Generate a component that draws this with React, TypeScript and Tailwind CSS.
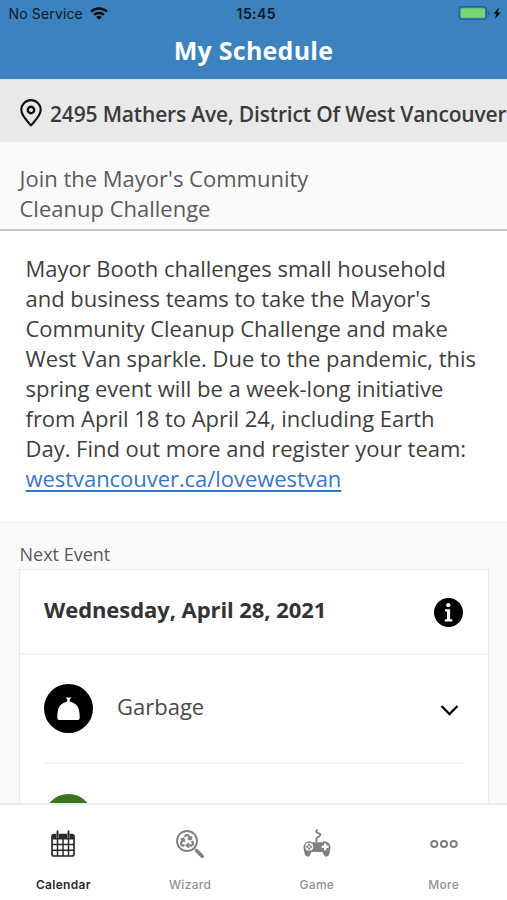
import type { ReactNode } from 'react';
import { FaRecycle } from 'react-icons/fa';
import { clsx } from 'clsx';

interface TabItem {
  id: string;
  label: string;
  icon: ReactNode;
}

const CalendarIcon = () => (
  <svg width="24" height="27" viewBox="0 0 24 27" fill="none">
    <rect x="1" y="4.5" width="22" height="21.5" rx="2" stroke="#2b2b2b" strokeWidth="1.7" />
    <path d="M1 4.500h22v5H1z" fill="#2b2b2b" />
    <path d="M1 14.500h22M1 20.200h22M6.500 9v17M12 9v17M17.500 9v17" stroke="#2b2b2b" strokeWidth="1.5" />
    <path d="M6.500 4v2.500M17.500 4v2.500" stroke="#aaa" strokeWidth="3" strokeLinecap="round" />
    <path d="M6.500 1.200v5.300M17.500 1.200v5.300" stroke="#2b2b2b" strokeWidth="1.8" strokeLinecap="round" />
  </svg>
);

const WizardIcon = () => (
  <span className="relative block h-[30px] w-[30px]">
    <svg width="30" height="30" viewBox="0 0 30 30" fill="none" stroke="#808080">
      <circle cx="12" cy="12" r="10" strokeWidth="1.9" />
      <path d="m19 19 2.5 2.5" strokeWidth="1.2" />
      <path d="m21.8 21.8 5.4 5.4" strokeWidth="3.6" strokeLinecap="round" />
    </svg>
    <FaRecycle className="absolute top-[5px] left-[5px] h-[14px] w-[14px] stroke-[#808080] stroke-[20px] text-[#808080]" />
  </span>
);

const GameIcon = () => (
  <svg width="28" height="29" viewBox="0 0 28 29" fill="none">
    <path d="M13.5 13V9.500c0-1.600 4-1.600 4-3.700S12.800 4.600 13.200 2.200c.2-.8.800-1.200 1.500-1.200" stroke="#808080" strokeWidth="1.8" />
    <path
      d="M5.5 12.5c1.300-.4 2.500 0 3.200.8h10.600c.7-.8 1.900-1.200 3.200-.8 2.800.5 5 2.900 5 5.700 0 1.500-.4 2.600-.6 3.800-.3 2.300-1 4.400-2.400 5.300-1.300.8-2.700.3-3.400-1-.6-1.200-1-2.700-1.700-3.300H8.600c-.7.6-1.100 2.100-1.700 3.300-.7 1.300-2.100 1.800-3.400 1C2.100 26.400 1.400 24.300 1.100 22 .9 20.800.5 19.700.5 18.200c0-2.800 2.200-5.200 5-5.700Z"
      fill="#808080"
    />
    <circle cx="6.2" cy="17.8" r="4" fill="#fff" />
    <path d="M6.200 14.800v6M3.200 17.800h6" stroke="#808080" strokeWidth="2" />
    <circle cx="6.2" cy="17.8" r="1" fill="#fff" />
    <path d="M22.200 14.400v6.800M18.800 17.800h6.800" stroke="#fff" strokeWidth="2.4" />
  </svg>
);

const MoreIcon = () => (
  <svg width="28" height="10" viewBox="0 0 28 10" fill="none" stroke="#808080" strokeWidth="2">
    <circle cx="4.3" cy="5" r="3.1" />
    <circle cx="14" cy="5" r="3.1" />
    <circle cx="23.7" cy="5" r="3.1" />
  </svg>
);

const tabs: TabItem[] = [
  { id: 'calendar', label: 'Calendar', icon: <CalendarIcon /> },
  { id: 'wizard', label: 'Wizard', icon: <WizardIcon /> },
  { id: 'game', label: 'Game', icon: <GameIcon /> },
  { id: 'more', label: 'More', icon: <MoreIcon /> },
];

const articleLines = [
  'Mayor Booth challenges small household',
  "and business teams to take the Mayor's",
  'Community Cleanup Challenge and make',
  'West Van sparkle. Due to the pandemic, this',
  'spring event will be a week-long initiative',
  'from April 18 to April 24, including Earth',
  'Day. Find out more and register your team:',
];

const StatusBar = () => (
  <div className="grid h-7 grid-cols-3 items-center pl-[8.5px] font-['Inter',sans-serif] text-[14px] leading-7 text-[#0c1a28]">
    <div className="flex items-center gap-[7px]">
      <span className="tracking-[0.15px] whitespace-nowrap">No Service</span>
      <svg className="-mt-[2px]" width="18" height="13" viewBox="0 0 18 13" fill="none" stroke="#050d14" strokeWidth="2.5">
        <path d="M1 4.700a11.400 11.400 0 0 1 16 0" />
        <path d="M4 7.900a7.200 7.200 0 0 1 10 0" />
        <path d="M9 12.800 6.200 10a4 4 0 0 1 5.600 0Z" fill="#050d14" stroke="none" />
      </svg>
    </div>
    <span className="pr-[3px] text-center font-semibold tracking-[0.4px]">15:45</span>
    <div className="flex items-center justify-end pr-[5px]">
      <svg className="-mt-[2px]" width="44" height="16" viewBox="0 0 44 16">
        <rect x="1" y="1.7" width="27.5" height="12.6" rx="3" fill="none" stroke="#265f91" strokeWidth="1.3" />
        <rect x="2.6" y="3.2" width="24.4" height="9.6" rx="1.6" fill="#76d671" />
        <path d="M30 6v4c1.2-.4 1.6-1.1 1.6-2s-.4-1.6-1.6-2Z" fill="#265f91" />
        <path d="m41 2.500-5.600 6.200h3L37 14l5.800-6.600h-3.200Z" fill="#050d14" />
      </svg>
    </div>
  </div>
);

const AddressBar = () => (
  <div className="flex h-[63px] shrink-0 items-center gap-[8px] border-t border-[#cfdfec] bg-[#e9e9e9] pt-[3px] pl-[20px]">
    <svg className="shrink-0" width="22" height="28" viewBox="0 0 22 28" fill="none" stroke="#111">
      <path d="M11 26.500C8.500 23 1.300 17.200 1.300 10.800a9.700 9.700 0 0 1 19.400 0C20.700 17.200 13.500 23 11 26.500Z" strokeWidth="2.1" strokeLinejoin="round" />
      <circle cx="11" cy="11" r="3.2" strokeWidth="2.4" />
    </svg>
    <span className="pt-[4px] text-[21px] font-semibold tracking-[-0.17px] whitespace-nowrap text-[#3b3b3b]">
      2495 Mathers Ave, District Of West Vancouver
    </span>
  </div>
);

const EventCard = () => (
  <div className="mr-[18px] ml-[19px] flex h-[300px] shrink-0 flex-col border border-[#ebebeb] bg-white">
    <div className="flex h-[85px] items-center justify-between border-b-2 border-[#f4f4f4] pr-[25px] pl-[24px]">
      <h2 className="pb-[5px] text-[22px] font-bold tracking-[-0.07px] text-[#333]">Wednesday, April 28, 2021</h2>
      <svg className="mt-[2px]" width="29" height="29" viewBox="0 0 29 29">
        <circle cx="14.5" cy="14.5" r="14.5" fill="#000" />
        <circle cx="14.3" cy="7.2" r="2.1" fill="#fff" />
        <path d="M11 11.200h5.100v10h2.200v2.200h-7.500v-2.200H13v-7.800h-2Z" fill="#fff" />
      </svg>
    </div>
    <div className="mx-[24px] flex h-[109px] shrink-0 items-center border-b-2 border-[#f6f6f6]">
      <svg width="49" height="49" viewBox="0 0 49 49">
        <circle cx="24.5" cy="24.5" r="24.5" fill="#000" />
        <path
          d="M21.500 13.500h6l-1.700 1.800v2.200c1.500.3 2.700 1 4.200 1.700 2.900 1.400 4.300 3.700 4.900 6.600.5 2.600.9 5.500.8 8-.1 1.500-.700 2.200-1.900 2.200H15.200c-1.200 0-1.800-.7-1.900-2.200-.1-2.500.3-5.400.8-8 .6-2.900 2-5.200 4.900-6.600 1.500-.7 2.700-1.400 4.200-1.700v-2.200Z"
          fill="#fff"
        />
      </svg>
      <span className="ml-[24px] grow pb-[5px] text-[22px] text-[#4a4a4a]">Garbage</span>
      <svg className="mt-[2px] mr-[5.5px]" width="19" height="12" viewBox="0 0 19 12" fill="none" stroke="#000" strokeWidth="2.3">
        <path d="m1.500 2 8 8 8-8" />
      </svg>
    </div>
    <div className="mx-[24px] pt-[29.5px]">
      <div className="size-[49px] rounded-full bg-[#39751e]" />
    </div>
  </div>
);

const TabBar = ({ active }: { active: string }) => (
  <nav className="grid h-[97px] shrink-0 grid-cols-4 border-t-2 border-[#ececec] bg-white font-['Inter',sans-serif]">
    {tabs.map((tab) => (
      <button key={tab.id} className="flex flex-col items-center">
        <span className="flex h-[77px] items-center">{tab.icon}</span>
        <span
          className={clsx(
            '-mt-[4px] text-[12px] leading-[14px] tracking-[0.3px]',
            tab.id === active ? 'font-semibold text-[#2b2b2b]' : 'font-medium text-[#929292]',
          )}
        >
          {tab.label}
        </span>
      </button>
    ))}
  </nav>
);

export default function App() {
  return (
    <div className="flex h-[900px] w-[507px] flex-col overflow-hidden bg-[#fafafa] font-['Open_Sans',sans-serif]">
      <header className="h-[79px] shrink-0 bg-[#3c82be]">
        <StatusBar />
        <h1 className="pt-[4px] text-center text-[25px] leading-9 font-bold tracking-[0.25px] text-white">My Schedule</h1>
      </header>
      <main className="flex min-h-0 grow flex-col overflow-hidden">
        <AddressBar />
        <div className="h-[89px] shrink-0 border-b-2 border-[#c6c6c6] pt-[21px] pl-[19.5px] text-[22px] leading-[30px] text-[#5a5a5a]">
          Join the Mayor's Community
          <br />
          Cleanup Challenge
        </div>
        <article className="h-[292px] shrink-0 border-b border-[#eee] bg-white pt-[22px] pl-[25.5px] text-[22px] leading-[30px] tracking-[-0.02px] whitespace-nowrap text-[#3f3f3f]">
          {articleLines.map((line) => (
            <p key={line}>{line}</p>
          ))}
          <a className="tracking-[-0.05px] text-[#3875ce] underline decoration-[1.5px] underline-offset-[3px]">westvancouver.ca/lovewestvan</a>
        </article>
        <h3 className="h-[46px] shrink-0 pt-[18px] pl-[19.5px] text-[18px] leading-[26px] text-[#5a5a5a]">Next Event</h3>
        <EventCard />
      </main>
      <TabBar active="calendar" />
    </div>
  );
}
